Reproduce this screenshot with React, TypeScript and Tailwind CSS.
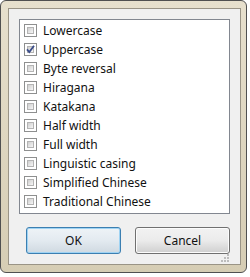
import React from "react";

const items = [
  { label: "Lowercase", checked: false },
  { label: "Uppercase", checked: true },
  { label: "Byte reversal", checked: false },
  { label: "Hiragana", checked: false },
  { label: "Katakana", checked: false },
  { label: "Half width", checked: false },
  { label: "Full width", checked: false },
  { label: "Linguistic casing", checked: false },
  { label: "Simplified Chinese", checked: false },
  { label: "Traditional Chinese", checked: false },
];

function Box({ checked }: { checked: boolean }) {
  return (
    <div className="w-[13px] h-[13px] border border-[#8e8f8f] bg-white p-[2px] shrink-0 relative">
      <div className="w-full h-full border border-[#b4b4b4] bg-gradient-to-br from-[#cfcfcf] to-[#f6f6f6]" />
      {checked && (
        <svg className="absolute left-0 top-0" width="11" height="11" viewBox="0 0 11 11">
          <path d="M2 5.3 L4.3 8 L9 1.8" fill="none" stroke="#3b4d8a" strokeWidth="1.8" />
        </svg>
      )}
    </div>
  );
}

export default function App() {
  return (
    <div className="w-[250px] h-[277px] bg-white" style={{ fontFamily: '"Noto Sans", "Open Sans", sans-serif' }}>
      <div className="w-[247px] h-[273px] rounded-[6px] border border-[#505050] bg-gradient-to-b from-[#e7e0cd] to-[#d6cdb4] p-[7px] flex">
        <div className="flex-1 border border-[#9a9486] bg-[#f0f0f0] flex flex-col pt-[10px] px-[10px]">
          <div className="h-[195px] border border-[#828790] bg-white pt-[1px] pl-[4px] flex flex-col">
            {items.map((it) => (
              <div key={it.label} className="h-[19px] flex items-center gap-[6px]">
                <Box checked={it.checked} />
                <span className="text-[12px] leading-none text-[#111]">{it.label}</span>
              </div>
            ))}
          </div>
          <div className="flex mt-[13px] pl-[7px] gap-[14px]">
            <button className="w-[95px] h-[27px] rounded-[3px] border border-[#3c7fb1] bg-gradient-to-b from-[#eef3f7] via-[#e3eaf0] to-[#cfd9e1] text-[12px] text-[#111] shadow-[inset_0_0_0_1px_#9fd3f3]">
              OK
            </button>
            <button className="w-[95px] h-[27px] rounded-[3px] border border-[#707070] bg-gradient-to-b from-[#f2f2f2] via-[#ebebeb] to-[#cfcfcf] text-[12px] text-[#111] shadow-[inset_0_0_0_1px_#fcfcfc]">
              Cancel
            </button>
          </div>
          <div className="flex-1 relative">
            <div className="absolute right-[0px] bottom-[1px] w-[9px] h-[9px]">
              <div className="absolute right-[1px] bottom-[1px] w-[2px] h-[2px] bg-[#bcbcbc]" />
              <div className="absolute right-[4px] bottom-[1px] w-[2px] h-[2px] bg-[#bcbcbc]" />
              <div className="absolute right-[7px] bottom-[1px] w-[2px] h-[2px] bg-[#bcbcbc]" />
              <div className="absolute right-[1px] bottom-[4px] w-[2px] h-[2px] bg-[#bcbcbc]" />
              <div className="absolute right-[4px] bottom-[4px] w-[2px] h-[2px] bg-[#bcbcbc]" />
              <div className="absolute right-[1px] bottom-[7px] w-[2px] h-[2px] bg-[#bcbcbc]" />
            </div>
          </div>
        </div>
      </div>
    </div>
  );
}
